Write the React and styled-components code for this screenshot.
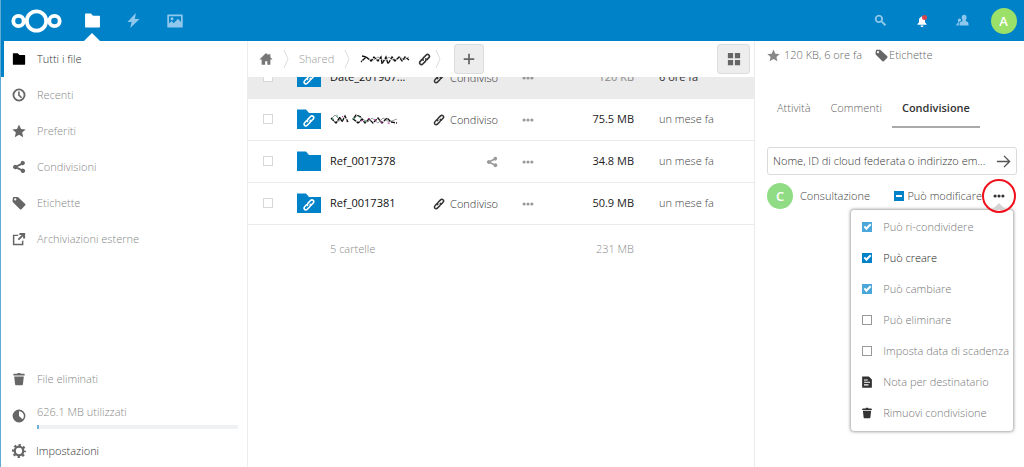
import React from "react";
import styled, { createGlobalStyle, css } from "styled-components";

const blue = "#0082c9";

const GlobalStyle = createGlobalStyle`
  *, *::before, *::after { box-sizing: border-box; }
  body {
    margin: 0;
    background: #fff;
    color: #222;
    font-family: "Open Sans", "Liberation Sans", sans-serif;
    font-size: 11px;
    font-weight: 300;
    line-height: 18px;
  }
  button, input { font: inherit; color: inherit; margin: 0; padding: 0; }
  button { background: none; border: 0; cursor: pointer; }
  a { color: inherit; text-decoration: none; }
`;

/* ---------- icons ---------- */

const Svg = styled.svg`
  display: block;
  flex: none;
  width: ${(p) => p.$size || 14}px;
  height: ${(p) => p.$size || 14}px;
  fill: currentColor;
`;

const paths = {
  folder: <path d="M1.500 1.500a.5.5 0 0 0-.5.5v12c0 .24.26.5.5.5h13c.24 0 .5-.26.5-.5V4c0-.24-.26-.5-.5-.5h-6l-2-2z" />,
  bolt: <path d="M10.500 0 1.500 9.500h4.500L4.500 16 14.500 6.500H9.500z" />,
  image: (
    <path
      fillRule="evenodd"
      d="M.8 1.500h14.400a.5.5 0 0 1 .5.5v12a.5.5 0 0 1-.5.5H.8a.5.5 0 0 1-.5-.5V2a.5.5 0 0 1 .5-.5zM2 3.200v7.300l2.500-2.500 2.200 2.200L11 5.800l3 3.200V3.200zM5 4.200a1.500 1.500 0 1 1 0 3 1.500 1.500 0 0 1 0-3z"
    />
  ),
  search: <path fillRule="evenodd" d="M6 1a5 5 0 1 0 2.700 9.200l4.500 4.600 1.800-1.800-4.600-4.500A5 5 0 0 0 6 1zm0 2.200a2.800 2.800 0 1 1 0 5.600 2.800 2.800 0 0 1 0-5.600z" />,
  bell: <path d="M8 1.500c-.7 0-1 .5-1 1.200C4.800 3.300 4 5 4 7v2.500L2 12v1h12v-1l-2-2.500V7c0-2-.8-3.700-3-4.300 0-.7-.3-1.200-1-1.200zM6 14a2 2 0 0 0 4 0z" />,
  contacts: (
    <path d="M10 1C8.200 1 7 2.300 7 4c0 1.500.3 2.600 1 3.500v1.200c-1.700.7-3 1.400-3.500 2.300L4.200 14H15.500l-.3-3c-.4-1-1.600-1.600-3.200-2.300V7.500c.7-.9 1-2 1-3.500 0-1.700-1.200-3-3-3zM4.500 5.500c-1.300 0-2.200.9-2.200 2.100 0 1 .2 1.700.7 2.300v.8C1.700 11.200.8 11.800.6 12.400L.5 14h2.700l.3-3.300c.4-.9 1.300-1.600 2.700-2.300.4-1.600-.2-2.900-1.700-2.900z" />
  ),
  clock: <path fillRule="evenodd" d="M8 .6a7.400 7.400 0 1 0 0 14.800A7.400 7.400 0 0 0 8 .6zm0 2.100a5.300 5.300 0 1 1 0 10.600A5.300 5.300 0 0 1 8 2.700zM7 4v4.600l3.400 3.200 1.200-1.300L8.800 7.800V4z" />,
  star: <path d="m8 .7 2.300 5 5.300.5-4 3.600 1.200 5.300L8 12.400l-4.800 2.700 1.200-5.300-4-3.600 5.300-.5z" />,
  share: <path d="M12.500 1A2.500 2.500 0 0 0 10 3.800L5.400 6.100a2.500 2.500 0 1 0 0 3.800l4.600 2.300a2.500 2.500 0 1 0 .9-1.800L6.200 8.100v-.2l4.700-2.300A2.500 2.500 0 1 0 12.500 1z" />,
  tag: <path fillRule="evenodd" d="M1.300 1 .5 5.500l.6 1.500 8 8c.5.5 1.200.5 1.700 0l4.300-4.300c.5-.5.5-1.200 0-1.700l-8-7.500L5.800 1zM3.700 2.600a1.300 1.300 0 1 1 0 2.600 1.300 1.300 0 0 1 0-2.600z" />,
  external: (
    <path d="M8.500 1v2.300h2.700L6.500 8 8 9.500l4.700-4.700v2.700H15V1zM1 3v12h12V9.500l-1.700 1.200v2.600H2.700V4.700H6.500L7.700 3z" />
  ),
  trash: <path d="M6.500 1 6 2H2.500c-.6 0-1 .5-1 1.200V4h13v-.8c0-.7-.4-1.200-1-1.200H10l-.5-1zM2.500 5l1 9c.1.600.5 1 1 1h7c.5 0 .9-.4 1-1l1-9z" />,
  quota: <path fillRule="evenodd" d="M8 .7a7.300 7.300 0 1 0 0 14.600A7.300 7.300 0 0 0 8 .7zM8 2.500a5.500 5.500 0 0 1 4 9.300L8 8z" />,
  gear: (
    <g>
      <circle cx="8" cy="8" r="4.900" fill="none" stroke="currentColor" strokeWidth="2.600" />
      <circle cx="8" cy="8" r="6.700" fill="none" stroke="currentColor" strokeWidth="2.600" strokeDasharray="2.630 2.630" strokeDashoffset="1.310" />
    </g>
  ),
  home: <path d="M8 1 .5 8.500H3v6h4V10.500h2.500v4H13v-6h2.500L13 6V2.500h-2.500v1z" />,
  link: (
    <g fill="none" stroke="currentColor" strokeWidth="2" strokeLinecap="round">
      <path d="M6.300 8.800c-.6-1.300-.2-2.300.6-3.100l3.200-3.200c1.100-1.100 2.500-1 3.300-.1.900.9.900 2.300-.1 3.300L11 8.200" />
      <path d="M9.700 7.200c.6 1.300.2 2.300-.6 3.100l-3.200 3.200c-1.100 1.100-2.500 1-3.300.1-.9-.9-.9-2.300.1-3.300L5 7.800" />
    </g>
  ),
  more: (
    <g>
      <circle cx="2.800" cy="8" r="2.100" />
      <circle cx="8" cy="8" r="2.100" />
      <circle cx="13.200" cy="8" r="2.100" />
    </g>
  ),
  plus: <path d="M7 2h2v5h5v2H9v5H7V9H2V7h5z" />,
  grid: <path d="M1 1h6v6H1zM9 1h6v6H9zM1 9h6v6H1zM9 9h6v6H9z" />,
  arrow: (
    <path d="M1 8h13M8.500 2 14.500 8l-6 6" fill="none" stroke="currentColor" strokeWidth="1.500" />
  ),
  note: <path fillRule="evenodd" d="M2 .5h8.500L14.500 4.500V15a.5.5 0 0 1-.5.5H2a.5.5 0 0 1-.5-.5V1a.5.5 0 0 1 .5-.5zM4 4.500V6h5V4.500zM4 7.500V9h8V7.500zM4 11v1.500h6V11z" />,
};

const Icon = ({ name, size }) => (
  <Svg viewBox="0 0 16 16" $size={size} aria-hidden="true">
    {paths[name]}
  </Svg>
);

/* ---------- header ---------- */

const Shell = styled.div`
  display: flex;
  flex-direction: column;
  height: 100vh;
  overflow: hidden;
  border-left: 1px solid #5fabd6;
`;

const Header = styled.header`
  display: flex;
  flex: none;
  align-items: stretch;
  height: 41px;
  background: ${blue};
  color: #fff;
`;

const LogoLink = styled.a`
  display: flex;
  align-items: center;
  width: 71px;
  padding-left: 10px;
`;

const Apps = styled.nav`
  display: flex;
  flex: 1;
`;

const AppLink = styled.a`
  display: flex;
  align-items: center;
  justify-content: center;
  position: relative;
  width: 41px;
  color: ${(p) => (p.$active ? "#fff" : "#8fc8ec")};
  ${(p) =>
    p.$active &&
    css`
      &::after {
        content: "";
        position: absolute;
        bottom: 0;
        left: 12px;
        border: 8px solid transparent;
        border-top: 0;
        border-bottom-color: #fff;
      }
    `}
`;

const HeaderButton = styled.button`
  display: flex;
  align-items: center;
  justify-content: center;
  position: relative;
  width: 41px;
  color: ${(p) => (p.$bright ? "#fff" : "#8fc8ec")};
`;

const AlertDot = styled.span`
  position: absolute;
  top: 15px;
  right: 15px;
  width: 5px;
  height: 5px;
  border-radius: 50%;
  background: #d8434e;
`;

const Avatar = styled.span`
  display: flex;
  flex: none;
  align-items: center;
  justify-content: center;
  width: 26px;
  height: 26px;
  border-radius: 50%;
  background: ${(p) => p.$color};
  color: #fff;
  font-size: 13px;
  font-weight: 600;
`;

/* ---------- left navigation ---------- */

const Body = styled.div`
  display: flex;
  flex: 1;
  min-height: 0;
`;

const Sidebar = styled.nav`
  display: flex;
  flex: none;
  flex-direction: column;
  justify-content: space-between;
  width: 247px;
  border-right: 1px solid #ededed;
`;

const NavList = styled.ul`
  margin: 0;
  padding: 0;
  list-style: none;
`;

const NavLink = styled.a`
  display: flex;
  align-items: center;
  gap: 11px;
  height: ${(p) => (p.$tall ? 38 : 36)}px;
  padding-left: 8px;
  border-left: 3px solid ${(p) => (p.$active ? blue : "transparent")};
  color: ${(p) => (p.$active ? "#333" : "#888")};

  svg { color: ${(p) => (p.$active ? "#000" : "#666")}; }
`;

const QuotaText = styled.div`
  flex: 1;
  padding-right: 9px;
`;

const Meter = styled.div`
  height: 4px;
  margin-top: 4px;
  background: #f0f1f3;
`;

const MeterFill = styled.div`
  width: 1%;
  height: 4px;
  background: #6cb2dc;
`;

const SettingsButton = styled.button`
  display: flex;
  align-items: center;
  gap: 10px;
  width: 100%;
  height: 32px;
  padding-left: 11px;
  color: #333;

  svg { color: #666; }
`;

/* ---------- file list ---------- */

const Main = styled.main`
  display: flex;
  flex: 1;
  flex-direction: column;
  min-width: 0;
`;

const Controls = styled.div`
  display: flex;
  flex: none;
  align-items: center;
  height: 36px;
  padding: 0 4px 0 11px;
`;

const Crumb = styled.a`
  display: flex;
  align-items: center;
  gap: 8px;
  color: ${(p) => (p.$dark ? "#333" : "#999")};
`;

const HomeCrumb = styled(Crumb)`
  color: #777;
`;

const ChevronSvg = styled.svg`
  display: block;
  flex: none;
  width: 6px;
  height: 20px;
  margin: 0 ${(p) => p.$after}px 0 ${(p) => p.$before}px;
  fill: none;
  stroke: #ddd;
`;

const Chevron = ({ before, after }) => (
  <ChevronSvg viewBox="0 0 6 20" $before={before} $after={after} aria-hidden="true">
    <path d="M1 1l4 9-4 9" />
  </ChevronSvg>
);

const SquareButton = styled.button`
  display: flex;
  align-items: center;
  justify-content: center;
  width: ${(p) => p.$width}px;
  height: 30px;
  margin-left: ${(p) => (p.$end ? "auto" : 0)};
  border: 1px solid #dcdcdc;
  border-radius: 3px;
  background: #ededed;
  color: #666;
`;

const ListViewport = styled.div`
  flex: 1;
  min-height: 0;
  overflow: hidden;
`;

const Table = styled.table`
  width: 100%;
  margin-top: -21px;
  border-collapse: collapse;
  table-layout: fixed;

  td { padding: 0; height: 42px; }
`;

const Row = styled.tr`
  border-bottom: 1px solid #ebebeb;
  background: ${(p) => (p.$selected ? "#ebebeb" : "transparent")};
`;

const SummaryRow = styled.tr`
  color: #888;

  && td { height: 50px; }
`;

const SelectCell = styled.td`
  && { padding-left: 15px; }
`;

const SizeCell = styled.td`
  && { padding-right: 25px; }
  text-align: right;
  font-weight: ${(p) => (p.$light ? 300 : 400)};
  color: ${(p) => (p.$muted ? "#888" : "#222")};
`;

const DateCell = styled.td`
  font-weight: ${(p) => (p.$strong ? 400 : 300)};
  color: ${(p) => (p.$strong ? "#333" : "#444")};
`;

const NameFlex = styled.div`
  display: flex;
  align-items: center;
  padding: 0 35px 0 9px;
`;

const FileLink = styled.a`
  display: flex;
  flex: 1;
  align-items: center;
  gap: 9px;
  min-width: 0;
  color: #111;
  font-weight: 400;
`;

const FolderSvg = styled.svg`
  display: block;
  flex: none;
  width: 24px;
  height: 20px;
`;

const ScribbleSvg = styled.svg`
  display: block;
  flex: none;
  fill: none;
`;

const ShareButton = styled.button`
  display: flex;
  align-items: center;
  gap: 5px;
  margin-right: 24px;
  padding-top: 2px;
  color: ${(p) => (p.$muted ? "#999" : "#333")};
`;

const MoreButton = styled.button`
  padding-top: ${(p) => (p.$dark ? 0 : 2)}px;
  color: ${(p) => (p.$dark ? "#333" : "#999")};
`;

const SummaryName = styled.td`
  && { padding-left: 42px; }
`;

const Check = styled.input`
  appearance: none;
  display: grid;
  place-items: center;
  flex: none;
  width: 10px;
  height: 10px;
  border: 1px solid ${(p) => (p.$pale ? "#d8d8d8" : "#999")};
  background: #fff;
  opacity: ${(p) => (p.$faded ? 0.7 : 1)};

  &:checked {
    border-color: ${blue};
    background: ${blue};
  }
  &:checked::before {
    content: "";
    width: 7px;
    height: 4px;
    margin-bottom: 2px;
    border: solid #fff;
    border-width: 0 0 2px 2px;
    transform: rotate(-45deg);
  }
`;

const PartialCheck = styled(Check)`
  &:checked::before {
    width: 6px;
    height: 2px;
    margin: 0;
    border: 0;
    background: #fff;
    transform: none;
  }
`;

const SharedFolder = ({ linked }) => (
  <FolderSvg viewBox="0 0 24 20" aria-hidden="true">
    <path d="M0 .5h9l3 3.500h12v16H0z" fill={blue} />
    {linked && (
      <g transform="translate(5.500 5.500) scale(.8)" color="#fff">
        {paths.link}
      </g>
    )}
  </FolderSvg>
);

const CrumbScribble = () => (
  <ScribbleSvg width="50" height="12" viewBox="0 0 50 12" role="img" aria-label="Cartella">
    <path stroke="#999" d="M1 8l6-4 5 4 6-4 6 4 5-4 5 4 6-4 4 3 5-3" />
    <path stroke="#111" strokeWidth="1.300" strokeDasharray="4 1" d="M2 3l4 1-5 5M6 4l5 4 3-4 4 4 3-4 1 7 4-7 2 7 4-7 3 4 4-4 3 4 3-4 4 3" />
  </ScribbleSvg>
);

const NameScribble = () => (
  <ScribbleSvg width="68" height="14" viewBox="0 0 68 14" role="img" aria-label="Nome cartella">
    <path stroke="#9a9a9a" d="M1 7l4-4 5 5-4 3zM24 7l4-4 4 3M24 7l5 4 3-4 6 3 4-4 6 5 5-5 6 4 8-3" />
    <path stroke="#111" strokeWidth="1.300" strokeDasharray="4 1" d="M1 6l5 5 4-6 2 5 3-6 3 6M31 5l-5-2-3 4 5 4 4-4 3 4 4-4 4 4 5-5 4 5 5-5 4 4 6 1" />
    <path stroke="#2aa66a" strokeDasharray="2 5" d="M2 8l4-5 7 5M23 7l5-3 8 6" />
    <path stroke="#b62ca8" strokeDasharray="2 5" d="M12 4l5 6M31 9l10-3 9 4 15 2" />
  </ScribbleSvg>
);

const files = [
  { id: "a", name: "Date_201907...", size: "120 KB", date: "6 ore fa", shared: true, selected: true },
  { id: "b", name: null, size: "75.5 MB", date: "un mese fa", shared: true },
  { id: "c", name: "Ref_0017378", size: "34.8 MB", date: "un mese fa", shared: false },
  { id: "d", name: "Ref_0017381", size: "50.9 MB", date: "un mese fa", shared: true },
];

const FileRow = ({ file }) => (
  <Row $selected={file.selected}>
    <SelectCell>
      <Check type="checkbox" $pale aria-label="Seleziona" />
    </SelectCell>
    <td>
      <NameFlex>
        <FileLink href="#">
          <SharedFolder linked={file.shared} />
          {file.name || <NameScribble />}
        </FileLink>
        <ShareButton $muted={!file.shared} aria-label="Condividi">
          <Icon name={file.shared ? "link" : "share"} size={12} />
          {file.shared && "Condiviso"}
        </ShareButton>
        <MoreButton aria-label="Azioni">
          <Icon name="more" size={12} />
        </MoreButton>
      </NameFlex>
    </td>
    <SizeCell $muted={file.selected}>{file.size}</SizeCell>
    <DateCell $strong={file.selected}>{file.date}</DateCell>
  </Row>
);

/* ---------- details panel ---------- */

const Details = styled.aside`
  display: flex;
  flex: none;
  flex-direction: column;
  width: 270px;
  padding: 5px 7px 0 12px;
  border-left: 1px solid #ebebeb;
`;

const Meta = styled.div`
  display: flex;
  align-items: center;
  gap: 4px;
  color: #666;

  > svg { color: #888; }
`;

const TagLink = styled.a`
  display: flex;
  align-items: center;
  gap: 1px;
  margin-left: 9px;

  svg { color: #666; }
`;

const Tabs = styled.div`
  display: flex;
  margin-top: 32px;
`;

const Tab = styled.button`
  height: 32px;
  padding: 0 10px 6px;
  border-bottom: 2px solid ${(p) => (p.$active ? "#aaa" : "transparent")};
  color: ${(p) => (p.$active ? "#333" : "#666")};
  font-weight: ${(p) => (p.$active ? 600 : 300)};
`;

const ShareForm = styled.form`
  display: flex;
  align-items: center;
  height: 28px;
  margin-top: 19px;
  padding: 0 5px;
  border: 1px solid #dbdbdb;
  border-radius: 3px;
  color: #555;
`;

const ShareInput = styled.input`
  flex: 1;
  min-width: 0;
  border: 0;
  outline: 0;
  background: none;
  text-overflow: ellipsis;

  &::placeholder { color: #333; opacity: 1; }
`;

const Sharee = styled.div`
  display: flex;
  align-items: center;
  gap: 7px;
  position: relative;
  height: 28px;
  margin-top: 7px;
  padding-right: 12px;
  color: #444;
`;

const PermissionLabel = styled.label`
  display: flex;
  align-items: center;
  gap: 3px;
  margin-left: auto;
`;

const Anchor = styled.div`
  display: flex;
  position: relative;
  margin-left: 4px;
`;

const Highlight = styled.span`
  position: absolute;
  z-index: 3;
  top: -11px;
  left: -11px;
  width: 34px;
  height: 34px;
  border: 2px solid #f0101c;
  border-radius: 50%;
  pointer-events: none;
`;

const Menu = styled.ul`
  position: absolute;
  z-index: 2;
  top: 28px;
  right: 4px;
  margin: 0;
  padding: 1px 0 3px;
  list-style: none;
  border-radius: 3px;
  background: #fff;
  box-shadow: 0 0 3px 1px rgba(77, 77, 77, 0.5);

  &::before {
    content: "";
    position: absolute;
    top: -7px;
    right: 7px;
    border: 7px solid transparent;
    border-top: 0;
    border-bottom-color: #d4d4d4;
  }
`;

const menuItem = css`
  display: flex;
  align-items: center;
  gap: 10px;
  height: 31px;
  padding: 0 4px 0 10px;
  white-space: nowrap;
  color: ${(p) => (p.$strong ? "#222" : "#777")};
`;

const MenuLabel = styled.label`
  ${menuItem}

  input { margin: 0 1px; }
`;

const MenuButton = styled.button`
  ${menuItem}

  svg { color: #333; }
`;

const permissions = [
  { label: "Può ri-condividere", checked: true, faded: true },
  { label: "Può creare", checked: true, strong: true },
  { label: "Può cambiare", checked: true, faded: true },
  { label: "Può eliminare", checked: false },
  { label: "Imposta data di scadenza", checked: false },
];

const navItems = [
  { icon: "folder", label: "Tutti i file", active: true },
  { icon: "clock", label: "Recenti" },
  { icon: "star", label: "Preferiti" },
  { icon: "share", label: "Condivisioni" },
  { icon: "tag", label: "Etichette" },
  { icon: "external", label: "Archiviazioni esterne" },
];

export default function App() {
  return (
    <>
      <GlobalStyle />
      <Shell>
        <Header>
          <LogoLink href="#" aria-label="Nextcloud">
            <svg width="52" height="24" viewBox="0 0 52 24" fill="none" stroke="#fff" strokeWidth="3.800" aria-hidden="true">
              <circle cx="7.500" cy="12" r="5.200" />
              <circle cx="25.500" cy="12" r="9.700" />
              <circle cx="43.500" cy="12" r="5.200" />
            </svg>
          </LogoLink>
          <Apps>
            <AppLink href="#" $active aria-label="File"><Icon name="folder" size={17} /></AppLink>
            <AppLink href="#" aria-label="Attività"><Icon name="bolt" size={15} /></AppLink>
            <AppLink href="#" aria-label="Galleria"><Icon name="image" size={16} /></AppLink>
          </Apps>
          <HeaderButton aria-label="Cerca"><Icon name="search" size={13} /></HeaderButton>
          <HeaderButton $bright aria-label="Notifiche">
            <Icon name="bell" size={12} />
            <AlertDot />
          </HeaderButton>
          <HeaderButton aria-label="Contatti"><Icon name="contacts" size={13} /></HeaderButton>
          <HeaderButton aria-label="Profilo"><Avatar $color="#9be069">A</Avatar></HeaderButton>
        </Header>

        <Body>
          <Sidebar>
            <NavList>
              {navItems.map((item) => (
                <li key={item.label}>
                  <NavLink href="#" $active={item.active}>
                    <Icon name={item.icon} />
                    {item.label}
                  </NavLink>
                </li>
              ))}
            </NavList>
            <NavList>
              <li>
                <NavLink href="#"><Icon name="trash" />File eliminati</NavLink>
              </li>
              <li>
                <NavLink href="#" $tall>
                  <Icon name="quota" />
                  <QuotaText>
                    626.1 MB utilizzati
                    <Meter><MeterFill /></Meter>
                  </QuotaText>
                </NavLink>
              </li>
              <li>
                <SettingsButton><Icon name="gear" />Impostazioni</SettingsButton>
              </li>
            </NavList>
          </Sidebar>

          <Main>
            <Controls>
              <HomeCrumb href="#" aria-label="Home"><Icon name="home" /></HomeCrumb>
              <Chevron before={10} after={10} />
              <Crumb href="#">Shared</Crumb>
              <Chevron before={10} after={10} />
              <Crumb href="#" $dark><CrumbScribble /><Icon name="link" size={13} /></Crumb>
              <Chevron before={4} after={13} />
              <SquareButton $width={30} aria-label="Nuovo"><Icon name="plus" /></SquareButton>
              <SquareButton $width={33} $end aria-label="Vista griglia"><Icon name="grid" /></SquareButton>
            </Controls>
            <ListViewport>
              <Table>
                <colgroup>
                  <col style={{ width: 40 }} />
                  <col />
                  <col style={{ width: 90 }} />
                  <col style={{ width: 95 }} />
                </colgroup>
                <tbody>
                  {files.map((file) => <FileRow key={file.id} file={file} />)}
                  <SummaryRow>
                    <td />
                    <SummaryName>5 cartelle</SummaryName>
                    <SizeCell $muted $light>231 MB</SizeCell>
                    <td />
                  </SummaryRow>
                </tbody>
              </Table>
            </ListViewport>
          </Main>

          <Details>
            <Meta>
              <Icon name="star" size={13} />
              <span>120 KB, 6 ore fa</span>
              <TagLink href="#"><Icon name="tag" size={13} />Etichette</TagLink>
            </Meta>
            <Tabs role="tablist">
              <Tab role="tab">Attività</Tab>
              <Tab role="tab">Commenti</Tab>
              <Tab role="tab" $active aria-selected="true">Condivisione</Tab>
            </Tabs>
            <ShareForm>
              <ShareInput type="text" aria-label="Condividi con" placeholder="Nome, ID di cloud federata o indirizzo em..." />
              <button type="button" aria-label="Conferma"><Icon name="arrow" size={15} /></button>
            </ShareForm>
            <Sharee>
              <Avatar $color="#8fdc84">C</Avatar>
              <span>Consultazione</span>
              <PermissionLabel>
                <PartialCheck type="checkbox" defaultChecked />
                Può modificare
              </PermissionLabel>
              <Anchor>
                <MoreButton $dark aria-label="Altre opzioni"><Icon name="more" size={12} /></MoreButton>
                <Highlight />
              </Anchor>
              <Menu>
                {permissions.map((p) => (
                  <li key={p.label}>
                    <MenuLabel $strong={p.strong}>
                      <Check type="checkbox" defaultChecked={p.checked} $faded={p.faded} />
                      {p.label}
                    </MenuLabel>
                  </li>
                ))}
                <li><MenuButton><Icon name="note" size={12} />Nota per destinatario</MenuButton></li>
                <li><MenuButton><Icon name="trash" size={12} />Rimuovi condivisione</MenuButton></li>
              </Menu>
            </Sharee>
          </Details>
        </Body>
      </Shell>
    </>
  );
}
